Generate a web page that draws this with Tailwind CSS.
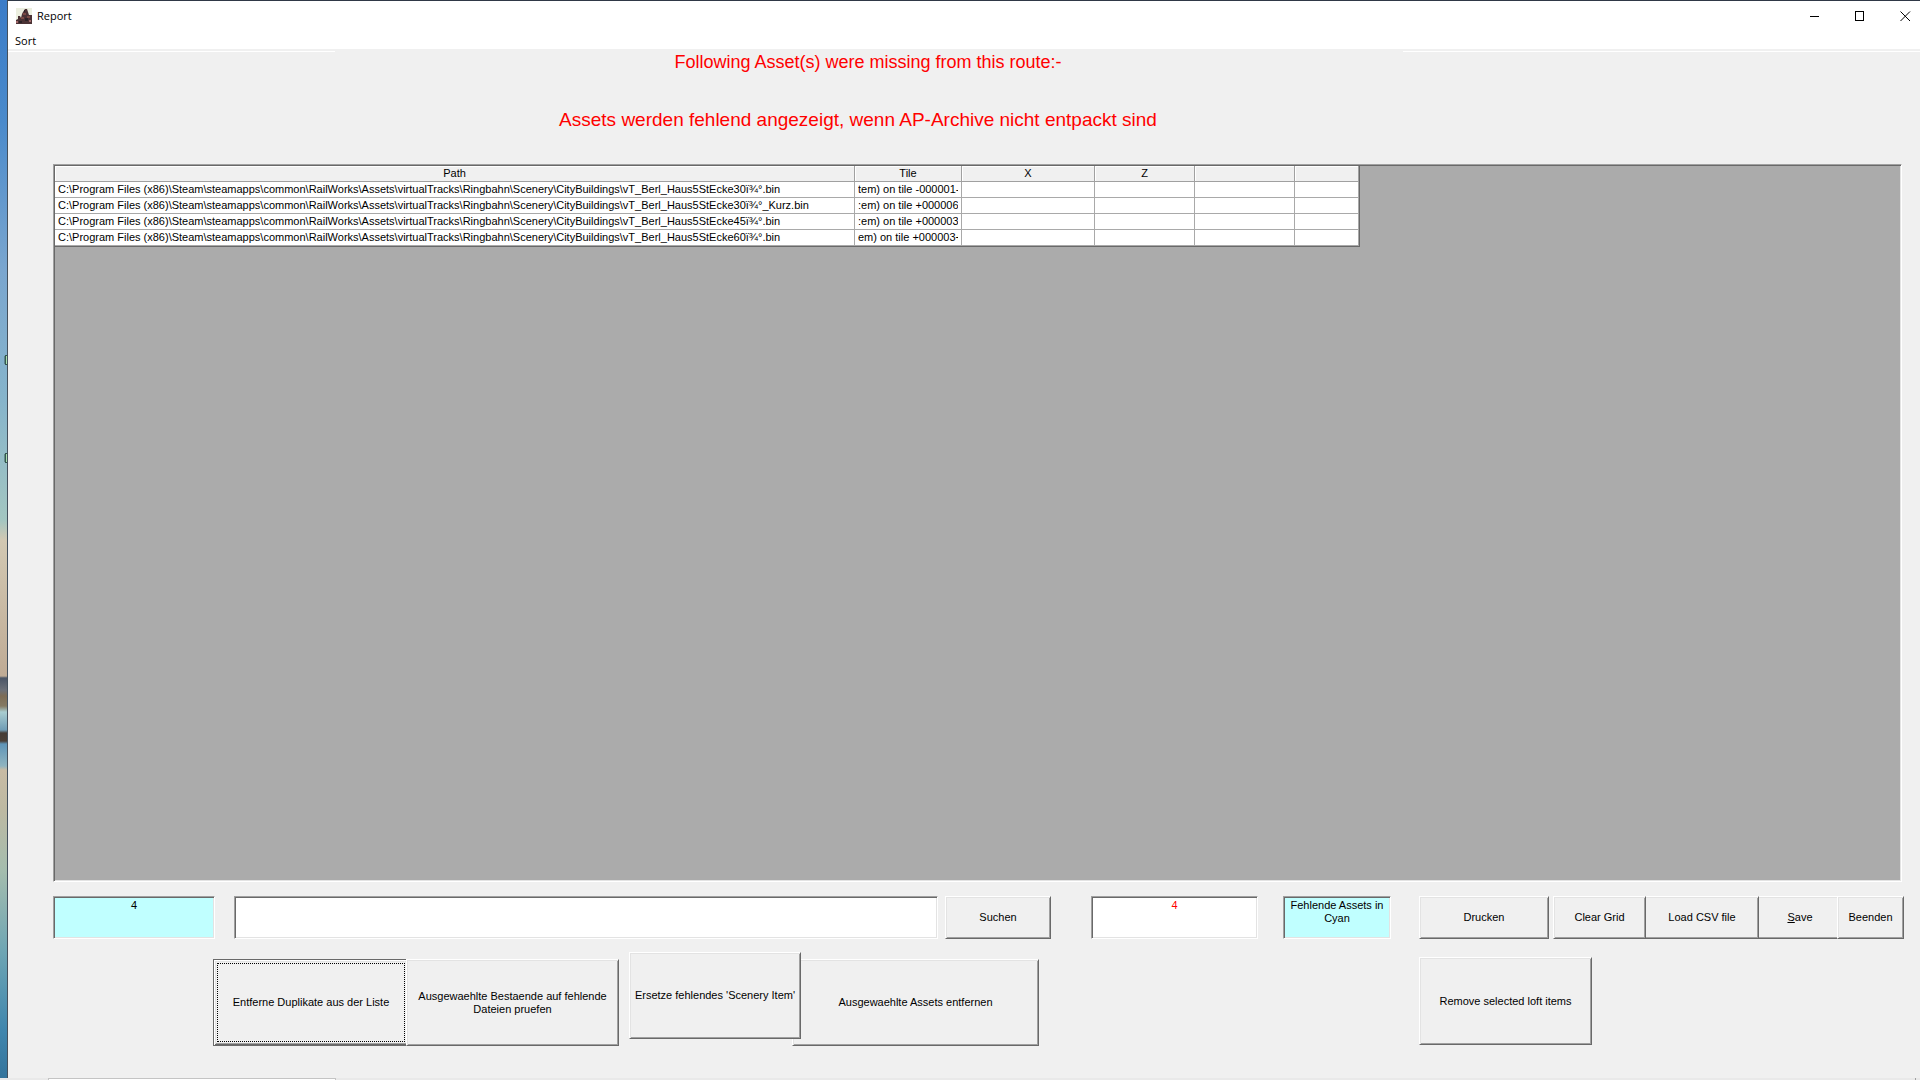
<!DOCTYPE html>
<html lang="de">

<head>
  <meta charset="UTF-8" />
  <meta name="viewport" content="width=device-width, initial-scale=1.0" />
  <title>Report</title>
  <script src="https://cdn.jsdelivr.net/npm/@tailwindcss/browser@4"></script>
</head>

<body class="h-screen flex flex-col overflow-hidden bg-[#f0f0f0] text-black text-[11px] leading-[13px] font-['Liberation_Sans',sans-serif]">

  <div class="flex-1 min-h-0 flex">

    <!-- Desktop behind the window -->
    <div class="relative w-[7px] shrink-0 overflow-hidden bg-[linear-gradient(to_bottom,#3a7cc8_0px,#4a8acb_120px,#7aa6cf_270px,#86b4cb_400px,#a3c6c1_520px,#d2c8b2_540px,#bfab95_676px,#4a5566_678px,#6c7078_690px,#7d6c55_696px,#857a62_706px,#a9cdd0_712px,#6f9cb5_730px,#453c36_733px,#4a4038_741px,#5f95b8_744px,#8fb4c0_766px,#c8bba4_770px,#bdb9a2_810px,#a5bdae_870px,#6fa6b4_950px,#3f86ae_1030px,#34749c_1078px)]">
      <svg class="absolute left-[4px] top-[354px]" width="3" height="112" viewBox="0 0 3 112">
        <path d="M1 1h2v10H1zM1 99h2v10H1z" fill="#35584f" />
        <path d="M0 2h1v8H0zM0 100h1v8H0z" fill="#35584f" opacity=".5" />
        <path d="M2.500 2v8M2.500 100v8" stroke="#a8e0b0" />
      </svg>
    </div>

    <!-- Window -->
    <div class="flex-1 min-w-0 flex flex-col border-t border-l border-t-[#2f3846] border-l-[#44505c] bg-[#f0f0f0]">

      <header class="bg-white h-12 font-['Open_Sans',sans-serif] text-[11px] leading-4">
        <div class="h-[30px] flex items-center overflow-hidden">
          <svg class="ml-2 -mt-px shrink-0" width="16" height="16" viewBox="0 0 16 16">
            <path d="M0 0h16v16H0z" fill="#ecefe0" />
            <path d="M0 12l2-1V8l2 0 1 2 1-4 1-2 2-3h2l1 3 1 3 3 0v9H0z" fill="#4b3235" />
            <path d="M7 5h3v2H7zM5 9h3v2H5zM11 8h3v2h-3z" fill="#7a4a44" />
            <path d="M9 10h3v3H9zM3 13h3v2H3zM8 2h1v2H8z" fill="#2b2226" />
            <path d="M0 13h2v2H0zM13 12h2v2h-2z" fill="#a0696a" />
          </svg>
          <h1 class="ml-[5px] flex-1">Report</h1>
          <button type="button" aria-label="Minimieren" class="w-[45px] h-full flex items-center justify-center">
            <svg width="11" height="11" viewBox="0 0 11 11" shape-rendering="crispEdges"><path d="M0 5.5h9" stroke="#000" /></svg>
          </button>
          <button type="button" aria-label="Maximieren" class="w-[45px] h-full flex items-center justify-center">
            <svg width="11" height="11" viewBox="0 0 11 11" fill="none" shape-rendering="crispEdges"><path d="M.5 .5h8v9h-8z" stroke="#000" /></svg>
          </button>
          <button type="button" aria-label="Schließen" class="w-[45px] h-full -mr-2 shrink-0 flex items-center justify-center">
            <svg width="11" height="11" viewBox="0 0 11 11" fill="none"><path d="M.5 .5l9.500 9.500M10 .5L.5 10" stroke="#000" /></svg>
          </button>
        </div>
        <nav class="pl-[7px] pt-0.5">
          <button type="button" class="block">Sort</button>
        </nav>
      </header>

      <!-- Separator under the menu -->
      <div class="mt-0.5 flex justify-between h-px shrink-0">
        <div class="w-[327px] bg-white"></div>
        <div class="w-[517px] bg-white"></div>
      </div>

      <main class="flex-1 min-h-0 flex flex-col pl-[45px] pr-4 pb-8">
        <div class="pr-[221px] text-center text-[#ff0000] font-['Liberation_Sans',sans-serif]">
          <p class="text-lg leading-5">Following Asset(s) were missing from this route:-</p>
          <p class="mt-9 pr-5 text-[19px] leading-6">Assets werden fehlend angezeigt, wenn AP-Archive nicht entpackt sind</p>
        </div>

        <!-- Grid -->
        <div class="mt-8 mr-0.5 flex-1 min-h-0 overflow-hidden bg-[#ababab] p-px border border-t-[#a0a0a0] border-l-[#a0a0a0] border-r-white border-b-white shadow-[inset_1px_1px_#696969,inset_-1px_-1px_#e3e3e3]">
          <table class="table-fixed w-[1305px] border-separate border-spacing-0 border-r border-b border-[#696969] bg-white leading-[15px] whitespace-nowrap [&_th]:h-4 [&_th]:p-0 [&_th]:font-normal [&_th]:bg-[#f0f0f0] [&_th]:border-r [&_th]:border-b [&_th]:border-[#a0a0a0] [&_th]:shadow-[inset_1px_1px_#fff] [&_td]:h-4 [&_td]:p-0 [&_td]:px-[3px] [&_td]:border-r [&_td]:border-b [&_td]:border-[#a9a9a9]">
            <colgroup>
              <col class="w-[800px]" />
              <col class="w-[107px]" />
              <col class="w-[133px]" />
              <col class="w-[100px]" />
              <col class="w-[100px]" />
              <col class="w-[64px]" />
            </colgroup>
            <thead>
              <tr>
                <th>Path</th>
                <th>Tile</th>
                <th>X</th>
                <th>Z</th>
                <th></th>
                <th></th>
              </tr>
            </thead>
            <tbody>
              <tr>
                <td>C:\Program Files (x86)\Steam\steamapps\common\RailWorks\Assets\virtualTracks\Ringbahn\Scenery\CityBuildings\vT_Berl_Haus5StEcke30ï¾°.bin</td>
                <td><div class="overflow-hidden">tem) on tile -000001-0</div></td>
                <td></td><td></td><td></td><td></td>
              </tr>
              <tr>
                <td>C:\Program Files (x86)\Steam\steamapps\common\RailWorks\Assets\virtualTracks\Ringbahn\Scenery\CityBuildings\vT_Berl_Haus5StEcke30ï¾°_Kurz.bin</td>
                <td><div class="overflow-hidden">:em) on tile +000006-0</div></td>
                <td></td><td></td><td></td><td></td>
              </tr>
              <tr>
                <td>C:\Program Files (x86)\Steam\steamapps\common\RailWorks\Assets\virtualTracks\Ringbahn\Scenery\CityBuildings\vT_Berl_Haus5StEcke45ï¾°.bin</td>
                <td><div class="overflow-hidden">:em) on tile +000003-0</div></td>
                <td></td><td></td><td></td><td></td>
              </tr>
              <tr>
                <td>C:\Program Files (x86)\Steam\steamapps\common\RailWorks\Assets\virtualTracks\Ringbahn\Scenery\CityBuildings\vT_Berl_Haus5StEcke60ï¾°.bin</td>
                <td><div class="overflow-hidden">em) on tile +000003+0</div></td>
                <td></td><td></td><td></td><td></td>
              </tr>
            </tbody>
          </table>
        </div>

        <!-- Search and file actions -->
        <div class="mt-3.5 h-[43px] shrink-0 flex">
          <div class="w-[162px] pt-0.5 text-center bg-[#c0ffff] border border-t-[#a0a0a0] border-l-[#a0a0a0] border-r-white border-b-white shadow-[inset_1px_1px_#696969,inset_-1px_-1px_#e3e3e3]">4</div>
          <input type="text" aria-label="Suchbegriff" class="ml-[19px] flex-1 min-w-0 px-1 outline-none bg-white border border-t-[#a0a0a0] border-l-[#a0a0a0] border-r-white border-b-white shadow-[inset_1px_1px_#696969,inset_-1px_-1px_#e3e3e3]" />
          <button type="button" class="ml-[7px] w-[106px] bg-[#f0f0f0] border border-t-white border-l-white border-r-[#696969] border-b-[#696969] shadow-[inset_1px_1px_#e3e3e3,inset_-1px_-1px_#a0a0a0]">Suchen</button>
          <div class="ml-10 w-[167px] pt-0.5 text-center text-[#ff0000] bg-white border border-t-[#a0a0a0] border-l-[#a0a0a0] border-r-white border-b-white shadow-[inset_1px_1px_#696969,inset_-1px_-1px_#e3e3e3]">4</div>
          <div class="ml-[25px] w-[108px] px-1 pt-0.5 text-center bg-[#c0ffff] border border-t-[#a0a0a0] border-l-[#a0a0a0] border-r-white border-b-white shadow-[inset_1px_1px_#696969,inset_-1px_-1px_#e3e3e3]">Fehlende Assets in Cyan</div>
          <button type="button" class="ml-7 w-[130px] bg-[#f0f0f0] border border-t-white border-l-white border-r-[#696969] border-b-[#696969] shadow-[inset_1px_1px_#e3e3e3,inset_-1px_-1px_#a0a0a0]">Drucken</button>
          <button type="button" class="ml-1 w-[93px] bg-[#f0f0f0] border border-t-white border-l-white border-r-[#696969] border-b-[#696969] shadow-[inset_1px_1px_#e3e3e3,inset_-1px_-1px_#a0a0a0]">Clear Grid</button>
          <button type="button" class="w-[113px] bg-[#f0f0f0] border border-l-0 border-t-white border-r-[#696969] border-b-[#696969] shadow-[inset_0_1px_#e3e3e3,inset_-1px_-1px_#a0a0a0]">Load CSV file</button>
          <button type="button" class="w-[78px] pl-1 bg-[#f0f0f0] border-y border-t-white border-b-[#696969] shadow-[inset_0_1px_#e3e3e3,inset_0_-1px_#a0a0a0]"><span class="underline">S</span>ave</button>
          <button type="button" class="w-[67px] bg-[#f0f0f0] border border-t-white border-l-white border-r-[#696969] border-b-[#696969] shadow-[inset_1px_1px_#e3e3e3,inset_-1px_-1px_#a0a0a0]">Beenden</button>
        </div>

        <!-- Asset actions -->
        <div class="mt-[13px] pl-40 shrink-0 flex items-start">
          <button type="button" class="mt-[7px] w-[193px] h-[87px] p-px bg-[#f0f0f0] border border-r-0 border-[#696969] shadow-[inset_1px_1px_#fff,inset_0_-1px_#696969,inset_2px_2px_#e3e3e3,inset_0_-2px_#a0a0a0]">
            <span class="m-0.5 mr-0 h-[79px] flex items-center justify-center border border-dotted border-black">Entferne Duplikate aus der Liste</span>
          </button>
          <button type="button" class="mt-[7px] w-[213px] h-[87px] px-1 bg-[#f0f0f0] border border-t-white border-l-white border-r-[#696969] border-b-[#696969] shadow-[inset_1px_1px_#e3e3e3,inset_-1px_-1px_#a0a0a0]">Ausgewaehlte Bestaende auf fehlende Dateien pruefen</button>
          <button type="button" class="relative z-10 ml-2.5 w-[172px] h-[87px] bg-[#f0f0f0] border border-t-white border-l-white border-r-[#696969] border-b-[#696969] shadow-[inset_1px_1px_#e3e3e3,inset_-1px_-1px_#a0a0a0]">Ersetze fehlendes 'Scenery Item'</button>
          <button type="button" class="mt-[7px] -ml-[9px] w-[247px] h-[87px] bg-[#f0f0f0] border border-t-white border-l-white border-r-[#696969] border-b-[#696969] shadow-[inset_1px_1px_#e3e3e3,inset_-1px_-1px_#a0a0a0]">Ausgewaehlte Assets entfernen</button>
          <button type="button" class="mt-[5px] ml-auto mr-[312px] w-[173px] h-[88px] bg-[#f0f0f0] border border-t-white border-l-white border-r-[#696969] border-b-[#696969] shadow-[inset_1px_1px_#e3e3e3,inset_-1px_-1px_#a0a0a0]">Remove selected loft items</button>
        </div>
      </main>
    </div>
  </div>

  <!-- Taskbar edge -->
  <footer class="h-0.5 shrink-0 flex justify-between bg-[#e9e9e9]">
    <div class="ml-12 w-72 bg-white border-t border-x border-[#c4c4c4]"></div>
    <div class="mr-1 w-px bg-[#a0a0a0]"></div>
  </footer>

</body>

</html>
